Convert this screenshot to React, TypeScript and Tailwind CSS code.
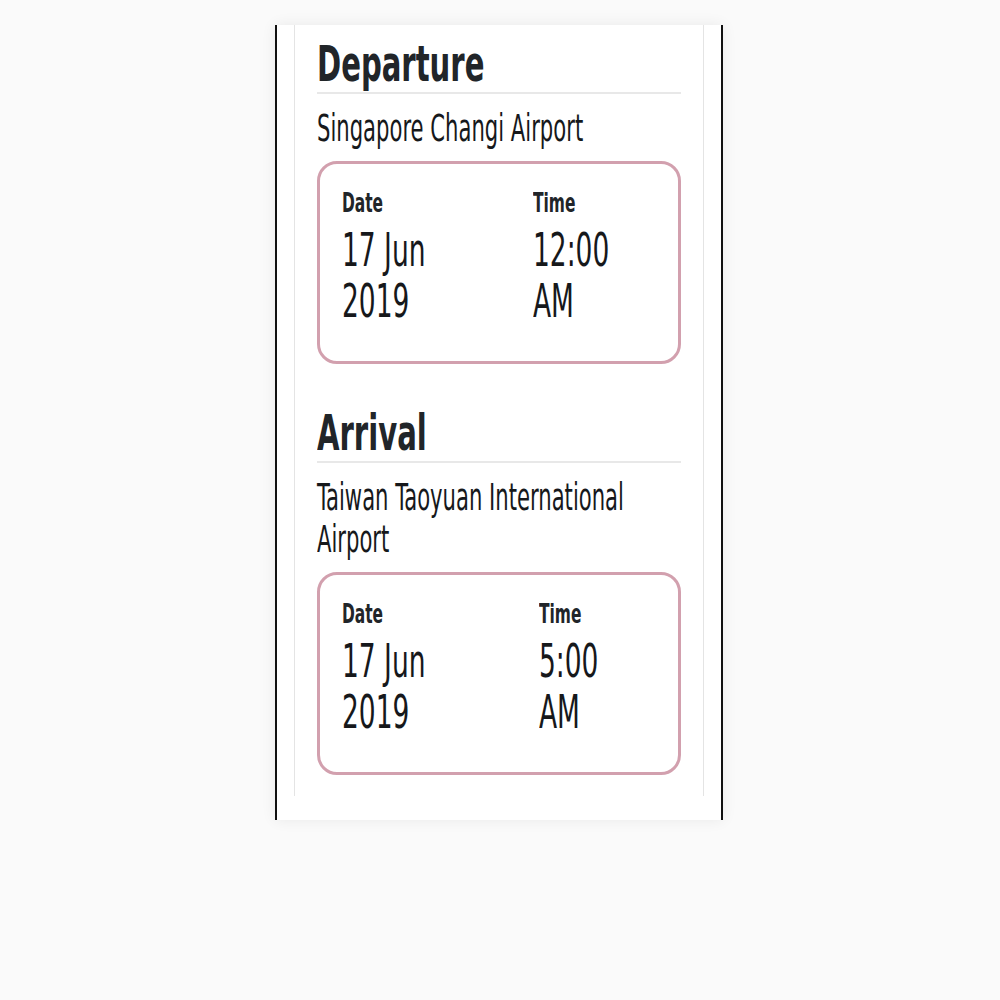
import type { ReactNode } from 'react';

type Leg = {
  title: string;
  place: string[];
  date: string[];
  time: string[];
  cols: string;
};

const legs: Leg[] = [
  {
    title: 'Departure',
    place: ['Singapore Changi Airport'],
    date: ['17 Jun', '2019'],
    time: ['12:00', 'AM'],
    cols: 'grid grid-cols-[191px_1fr]',
  },
  {
    title: 'Arrival',
    place: ['Taiwan Taoyuan International', 'Airport'],
    date: ['17 Jun', '2019'],
    time: ['5:00', 'AM'],
    cols: 'grid grid-cols-[197px_1fr]',
  },
];

const font = "font-['DejaVu_Sans_Condensed','DejaVu_Sans',sans-serif] font-stretch-condensed";

// the source uses a very narrow display face, so squeeze DejaVu Condensed to fit
function Narrow({ children, className }: { children: ReactNode; className: string }) {
  return (
    <span className={`inline-block origin-left whitespace-nowrap ${className}`}>{children}</span>
  );
}

function Section({ leg }: { leg: Leg }) {
  return (
    <section className="flex flex-col">
      <h2 className="h-[54px] text-[49px] leading-[54px] font-bold text-[#212529]">
        <Narrow className="scale-x-[0.66]">{leg.title}</Narrow>
      </h2>
      <div className="h-[2px] bg-[#e8e8e8]" />
      <div className="mt-[14px] text-[37px] leading-[42px] text-[#16181b]">
        {leg.place.map((line) => (
          <div key={line} className="h-[42px]">
            <Narrow className="scale-x-[0.635]">{line}</Narrow>
          </div>
        ))}
      </div>
      <div className="mt-[11px] rounded-[20px] border-[3px] border-[#d2a0ae] px-[22px] pt-[24px] pb-[34px]">
        <div className={leg.cols}>
          {[
            { label: 'Date', lines: leg.date },
            { label: 'Time', lines: leg.time },
          ].map((col) => (
            <div key={col.label} className="flex flex-col">
              <div className="h-[30px] text-[26px] leading-[30px] font-bold text-[#212529]">
                <Narrow className="scale-x-[0.66]">{col.label}</Narrow>
              </div>
              <div className="mt-[7px] text-[46px] leading-[51px] text-[#16181b]">
                {col.lines.map((line) => (
                  <div key={line} className="h-[51px]">
                    <Narrow className="scale-x-[0.64]">{line}</Narrow>
                  </div>
                ))}
              </div>
            </div>
          ))}
        </div>
      </div>
    </section>
  );
}

export default function App() {
  return (
    <div className={`min-h-screen bg-[#fafafa] pt-[25px] ${font}`}>
      <div className="ml-[275px] w-[448px] border-x-2 border-[#111] bg-white pb-[24px] shadow-[0_0_14px_rgba(0,0,0,0.07)]">
        <div className="mx-[17px] flex flex-col gap-[43px] border-x border-[#e4e4e4] px-[22px] pt-[13px] pb-[21px]">
          {legs.map((leg) => (
            <Section key={leg.title} leg={leg} />
          ))}
        </div>
      </div>
    </div>
  );
}
